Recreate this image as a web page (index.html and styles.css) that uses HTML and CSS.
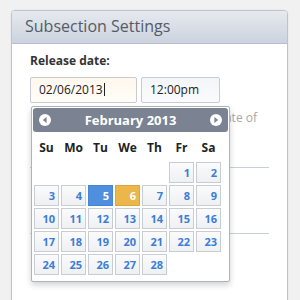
FILE: index.html
```html
<!DOCTYPE html>
<html lang="en">
<head>
   <meta charset="UTF-8">
   <title>Subsection Settings</title>
   <link rel="stylesheet" href="styles.css">
</head>
<body>
   <div class="panel">
      <div class="panel-head">Subsection Settings</div>
      <div class="panel-body">
         <label class="field-label">Release date:</label>
         <div class="date-row">
            <div class="date-field">
               <div class="input date-input">02/06/2013<span class="caret"></span></div>
               <div class="datepicker">
                  <div class="dp-head">
                     <svg class="dp-arrow" width="12" height="12" viewBox="0 0 12 12"><circle cx="6" cy="6" r="6" fill="#fff"/><polygon points="7.6,3 3.8,6 7.6,9" fill="#7b8292"/></svg>
                     <span>February 2013</span>
                     <svg class="dp-arrow" width="12" height="12" viewBox="0 0 12 12"><circle cx="6" cy="6" r="6" fill="#fff"/><polygon points="4.4,3 8.2,6 4.4,9" fill="#7b8292"/></svg>
                  </div>
                  <div class="dp-grid">
                     <span class="dow">Su</span><span class="dow">Mo</span><span class="dow">Tu</span><span class="dow">We</span><span class="dow">Th</span><span class="dow">Fr</span><span class="dow">Sa</span>
                     <span></span><span></span><span></span><span></span><span></span>
                     <a class="day">1</a><a class="day">2</a>
                     <a class="day">3</a><a class="day">4</a><a class="day today">5</a><a class="day selected">6</a><a class="day">7</a><a class="day">8</a><a class="day">9</a>
                     <a class="day">10</a><a class="day">11</a><a class="day">12</a><a class="day">13</a><a class="day">14</a><a class="day">15</a><a class="day">16</a>
                     <a class="day">17</a><a class="day">18</a><a class="day">19</a><a class="day">20</a><a class="day">21</a><a class="day">22</a><a class="day">23</a>
                     <a class="day">24</a><a class="day">25</a><a class="day">26</a><a class="day">27</a><a class="day">28</a>
                  </div>
               </div>
            </div>
            <div class="input time-input">12:00pm</div>
         </div>
         <p class="hint">Hidden from students until the date of</p>
         <hr class="sep first">
         <hr class="sep">
      </div>
   </div>
</body>
</html>
```

FILE: styles.css
```css
body {
   margin: 0;
   padding: 10px 12px 0 11px;
   background: #f1f1f1;
   font-family: "Open Sans", sans-serif;
}

.panel {
   height: 300px;
   background: #fff;
   border: 1px solid #bcc3ce;
   border-radius: 4px 4px 0 0;
   box-shadow: 0 0 2px rgba(0, 0, 0, .08);
}

.panel-head {
   height: 32px;
   padding: 0 13px;
   line-height: 31px;
   font-size: 16px;
   color: #555b66;
   background: linear-gradient(#e6e9ef, #ccd3de);
   border-bottom: 1px solid #b7bfcb;
   border-radius: 3px 3px 0 0;
}

.panel-body {
   padding: 9px 18px 0 18px;
}

.field-label {
   display: block;
   font-size: 12px;
   font-weight: 700;
   line-height: 16px;
   color: #333;
   margin-bottom: 8px;
}

.date-row {
   display: flex;
   gap: 4px;
}

.date-field {
   position: relative;
}

.input {
   box-sizing: border-box;
   height: 26px;
   padding: 0 8px;
   line-height: 24px;
   font-size: 12px;
   color: #222;
   border: 1px solid #c8cbd0;
   border-radius: 2px;
}

.date-input {
   width: 107px;
   background: linear-gradient(#fff8ee, #fffcf7);
}

.caret {
   display: inline-block;
   width: 1px;
   height: 13px;
   margin-left: 1px;
   vertical-align: -2px;
   background: #222;
}

.time-input {
   width: 79px;
   background: linear-gradient(#f3f5f8, #fafbfc);
}

.hint {
   margin: 6px 0 0;
   padding-right: 12px;
   text-align: right;
   font-size: 12px;
   line-height: 18px;
   color: #a7a7a7;
   white-space: nowrap;
}

.sep {
   margin: 39px 0 0;
   border: 0;
   border-top: 1px solid #c8cfdb;
}

.sep.first {
   margin-top: 40px;
}

.sep + .sep {
   margin-top: 65px;
}

.datepicker {
   position: absolute;
   top: 29px;
   left: 1px;
   z-index: 2;
   width: 195px;
   padding: 1px 1px 6px;
   background: #fff;
   border: 1px solid #aeb4be;
   border-radius: 2px;
   box-shadow: 0 3px 6px rgba(0, 0, 0, .18);
}

.dp-head {
   display: flex;
   align-items: center;
   justify-content: space-between;
   height: 24px;
   padding: 0 6px;
   background: #7b8292;
   border-radius: 3px;
   color: #fff;
   font-size: 13px;
   font-weight: 700;
}

.dp-arrow {
   display: block;
}

.dp-grid {
   display: grid;
   grid-template-columns: repeat(7, 25px);
   grid-template-rows: 28px repeat(5, 21px);
   gap: 2px;
   margin: 0 1px;
}

.dow {
   padding-top: 8px;
   text-align: center;
   font-size: 12px;
   font-weight: 700;
   line-height: 16px;
   color: #222;
}

.day {
   box-sizing: border-box;
   padding-right: 3px;
   text-align: right;
   font-size: 11px;
   font-weight: 700;
   line-height: 19px;
   color: #3b7dd8;
   background: linear-gradient(#fbfbfc, #eef0f2);
   border: 1px solid #c8ccd4;
}

.day.today {
   color: #fff;
   background: #4f8fdd;
   border-color: #4585d4;
}

.day.selected {
   color: #fff;
   background: #ebb64a;
   border-color: #dca63e;
}
```
